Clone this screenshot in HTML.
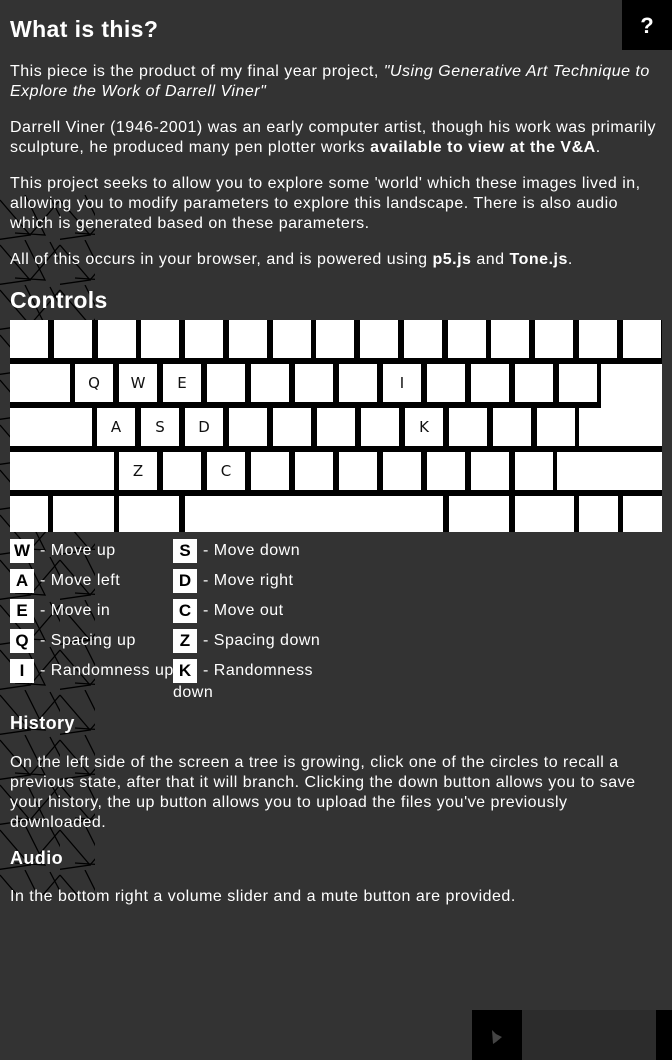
<!DOCTYPE html>
<html><head><style>
body{margin:0;width:672px;height:1060px;background:#333;overflow:hidden;position:relative;font-family:"Liberation Sans",sans-serif;color:#fff}
.t{position:absolute;left:10px;font-size:16px;line-height:20px;white-space:nowrap;letter-spacing:0.5px}
h1,h2,h3{position:absolute;left:10px;margin:0;font-weight:bold;letter-spacing:0.4px}
#kb{position:absolute;left:10px;top:320px;width:652px;height:212px;background:#000}
.k{position:absolute;background:#fff;color:#111;font-size:15px;display:flex;align-items:center;justify-content:center;font-family:"DejaVu Sans",sans-serif}
.b{position:absolute;width:24px;height:24px;background:#fff;color:#000;font-weight:bold;font-size:17px;display:flex;align-items:center;justify-content:center}
.l{position:absolute;font-size:16px;line-height:20px;letter-spacing:0.5px;white-space:nowrap}
</style></head><body>
<svg style="position:absolute;left:0;top:195px" width="100" height="700">
<defs><pattern id="p" width="60" height="45" patternUnits="userSpaceOnUse">
<path d="M0 5 L30 40 L-5 45 M25 0 L45 40 L15 38 M30 40 L60 5 M50 2 L70 40" stroke="#000" stroke-width="1.3" fill="none"/>
</pattern></defs>
<rect x="0" y="0" width="95" height="700" fill="url(#p)"/>
</svg>
<div style="position:absolute;left:622px;top:0;width:50px;height:50px;background:#000;font-weight:bold;font-size:22px;text-align:center;line-height:52px">?</div>
<h1 style="top:16px;font-size:23px">What is this?</h1>
<div class="t" style="top:62px">This piece is the product of my final year project, <i>"Using Generative Art Technique to<br>Explore the Work of Darrell Viner"</i></div>
<div class="t" style="top:118px">Darrell Viner (1946-2001) was an early computer artist, though his work was primarily<br>sculpture, he produced many pen plotter works <b>available to view at the V&amp;A</b>.</div>
<div class="t" style="top:174px">This project seeks to allow you to explore some 'world' which these images lived in,<br>allowing you to modify parameters to explore this landscape. There is also audio<br>which is generated based on these parameters.</div>
<div class="t" style="top:250px">All of this occurs in your browser, and is powered using <b>p5.js</b> and <b>Tone.js</b>.</div>
<h2 style="top:287px;font-size:23px">Controls</h2>
<div id="kb"></div>
<div class="b" style="left:10px;top:539px">W</div><div class="l" style="left:40px;top:541px">- Move up</div>
<div class="b" style="left:10px;top:569px">A</div><div class="l" style="left:40px;top:571px">- Move left</div>
<div class="b" style="left:10px;top:599px">E</div><div class="l" style="left:40px;top:601px">- Move in</div>
<div class="b" style="left:10px;top:629px">Q</div><div class="l" style="left:40px;top:631px">- Spacing up</div>
<div class="b" style="left:10px;top:659px">I</div><div class="l" style="left:40px;top:661px">- Randomness up</div>
<div class="b" style="left:173px;top:539px">S</div><div class="l" style="left:203px;top:541px">- Move down</div>
<div class="b" style="left:173px;top:569px">D</div><div class="l" style="left:203px;top:571px">- Move right</div>
<div class="b" style="left:173px;top:599px">C</div><div class="l" style="left:203px;top:601px">- Move out</div>
<div class="b" style="left:173px;top:629px">Z</div><div class="l" style="left:203px;top:631px">- Spacing down</div>
<div class="b" style="left:173px;top:659px">K</div><div class="l" style="left:203px;top:661px">- Randomness</div>
<div class="l" style="left:173px;top:683px">down</div>
<h3 style="top:713px;font-size:18px">History</h3>
<div class="t" style="top:753px">On the left side of the screen a tree is growing, click one of the circles to recall a<br>previous state, after that it will branch. Clicking the down button allows you to save<br>your history, the up button allows you to upload the files you've previously<br>downloaded.</div>
<h3 style="top:848px;font-size:18px">Audio</h3>
<div class="t" style="top:887px">In the bottom right a volume slider and a mute button are provided.</div>
<div style="position:absolute;left:472px;top:1010px;width:50px;height:50px;background:#000"></div>
<svg style="position:absolute;left:490px;top:1028px" width="16" height="20"><path d="M2 2 L3 16 L6 14 L12 9 L6 6 Z" fill="#444"/></svg>
<div style="position:absolute;left:522px;top:1010px;width:134px;height:50px;background:#2c2c2c"></div>
<div style="position:absolute;left:656px;top:1010px;width:16px;height:50px;background:#000"></div>
<script>
var kb=document.getElementById('kb'),h='';
function k(x1,x2,y1,y2,t){h+='<div class="k" style="left:'+(x1-10)+'px;top:'+(y1-320)+'px;width:'+(x2-x1)+'px;height:'+(y2-y1)+'px">'+(t||'')+'</div>';}
for(var i=0;i<15;i++){var x=Math.round(10+43.75*i);k(x,Math.min(x+38,662),320,358);}
k(10,70,364,402);var r2=['Q','W','E','','','','','I','','','',''];
for(i=0;i<12;i++){x=75+44*i;k(x,x+38,364,402,r2[i]);}
k(601,662,364,446);
k(10,92,408,446);var r3=['A','S','D','','','','','K','','',''];
for(i=0;i<11;i++){x=97+44*i;k(x,x+38,408,446,r3[i]);}
k(579,662,408,446);
k(10,114,452,490);var r4=['Z','','C','','','','','','',''];
for(i=0;i<10;i++){x=119+44*i;k(x,x+38,452,490,r4[i]);}
k(557,662,452,490);
k(10,48,496,532);k(53,114,496,532);k(119,179,496,532);k(185,443,496,532);k(449,509,496,532);k(515,574,496,532);k(579,618,496,532);k(623,662,496,532);
kb.innerHTML=h;
</script>
</body></html>
